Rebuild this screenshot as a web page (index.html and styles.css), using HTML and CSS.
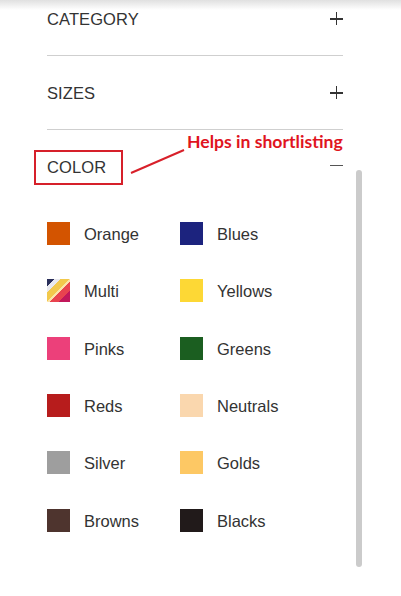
FILE: index.html
```html
<!DOCTYPE html>
<html>
<head>
<meta charset="utf-8">
<link rel="stylesheet" href="styles.css">
</head>
<body>
<div class="page">
  <div class="topshade"></div>
  <div class="filters">
    <section class="section">
      <div class="head"><span class="title">CATEGORY</span><span class="icon plus"></span></div>
    </section>
    <section class="section">
      <div class="head"><span class="title">SIZES</span><span class="icon plus"></span></div>
    </section>
    <section class="section open">
      <div class="head">
        <span class="title">COLOR</span><span class="icon minus"></span>
        <span class="note-box"></span>
        <svg class="note-line" width="60" height="30" viewBox="0 0 60 30"><line x1="2" y1="27" x2="55" y2="4" stroke="#d8202a" stroke-width="2"/></svg>
        <span class="note-text">Helps in shortlisting</span>
      </div>
      <div class="swatches">
        <div class="item"><span class="sw" style="background:#d35400"></span><span class="label">Orange</span></div>
        <div class="item"><span class="sw" style="background:#1c237e"></span><span class="label">Blues</span></div>
        <div class="item"><span class="sw multi"></span><span class="label">Multi</span></div>
        <div class="item"><span class="sw" style="background:#fdd835"></span><span class="label">Yellows</span></div>
        <div class="item"><span class="sw" style="background:#ec407a"></span><span class="label">Pinks</span></div>
        <div class="item"><span class="sw" style="background:#1b5e20"></span><span class="label">Greens</span></div>
        <div class="item"><span class="sw" style="background:#b71c1c"></span><span class="label">Reds</span></div>
        <div class="item"><span class="sw" style="background:#fad7ae"></span><span class="label">Neutrals</span></div>
        <div class="item"><span class="sw" style="background:#9e9e9e"></span><span class="label">Silver</span></div>
        <div class="item"><span class="sw" style="background:#fdc864"></span><span class="label">Golds</span></div>
        <div class="item"><span class="sw" style="background:#4e342e"></span><span class="label">Browns</span></div>
        <div class="item"><span class="sw" style="background:#211a1a"></span><span class="label">Blacks</span></div>
      </div>
    </section>
  </div>
  <div class="scrollbar"></div>
</div>
</body>
</html>
```
FILE: styles.css
```css
html, body {
  margin: 0;
  padding: 0;
  background: #fff;
}
body {
  font-family: "Liberation Sans", Arial, sans-serif;
  color: #333;
  width: 401px;
  height: 596px;
  overflow: hidden;
}
.page {
  position: relative;
  display: flow-root;
  width: 401px;
  height: 596px;
}
.topshade {
  position: absolute;
  left: 0;
  top: 0;
  width: 401px;
  height: 10px;
  background: linear-gradient(#e0e0e0, rgba(255,255,255,0));
  z-index: 2;
}
.filters {
  margin-top: -18px;
  margin-left: 47px;
  width: 296px;
}
.section {
  border-bottom: 1px solid #cfcfcf;
}
.section.open {
  border-bottom: none;
}
.head {
  position: relative;
  height: 73px;
  display: flex;
  align-items: center;
  justify-content: space-between;
}
.title {
  font-size: 16.5px;
  letter-spacing: 0.1px;
  color: #333;
  padding-top: 1px;
}
.icon {
  position: relative;
  width: 13px;
  height: 13px;
}
.icon::before, .icon::after {
  content: "";
  position: absolute;
  background: #333;
}
.plus::before {
  left: 0;
  top: 6px;
  width: 13px;
  height: 1.5px;
}
.plus::after {
  left: 5.8px;
  top: 0;
  width: 1.5px;
  height: 13px;
}
.minus::before {
  left: 0;
  top: 5px;
  width: 13px;
  height: 1.3px;
  background: #555;
}
.note-box {
  position: absolute;
  left: -13px;
  top: 20px;
  width: 85px;
  height: 31px;
  border: 2px solid #d6202a;
}
.note-line {
  position: absolute;
  left: 82px;
  top: 16px;
}
.note-text {
  position: absolute;
  left: 140px;
  top: 1px;
  font-family: Lato, "Open Sans", sans-serif;
  font-weight: 700;
  font-size: 17.6px;
  color: #e0141e;
  white-space: nowrap;
}
.swatches {
  display: grid;
  grid-template-columns: 133px 133px;
  grid-auto-rows: 57.33px;
  padding-top: 2px;
}
.item {
  display: flex;
  align-items: center;
}
.sw {
  width: 23px;
  height: 23px;
  flex: none;
  margin-right: 14px;
}
.sw.multi {
  background: linear-gradient(135deg, #2a2f5a 0 16%, #e8e8ee 16% 30%, #f2c94c 30% 48%, #fbe3a8 48% 56%, #e8434f 56% 74%, #c2185b 74% 100%);
}
.label {
  font-size: 16.5px;
  color: #333;
  padding-top: 2px;
}
.scrollbar {
  position: absolute;
  left: 356px;
  top: 170px;
  width: 6px;
  height: 397px;
  border-radius: 3px;
  background: #cbcbcb;
}
```
